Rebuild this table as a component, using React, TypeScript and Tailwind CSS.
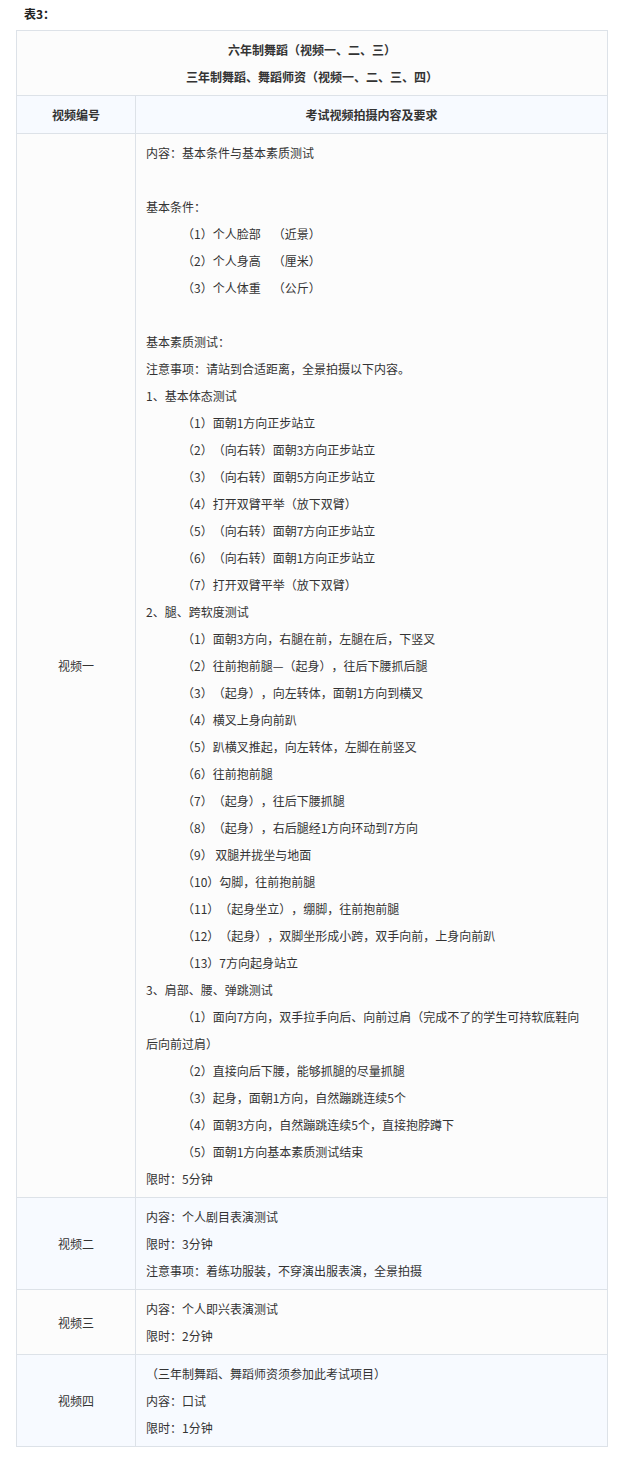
const font = { fontFamily: '"Microsoft YaHei", "Noto Sans CJK SC", "Noto Sans", sans-serif' }

type Line = { text: string; indent?: boolean }

const video1: Line[] = [
  { text: "内容：基本条件与基本素质测试" },
  { text: "" },
  { text: "基本条件：" },
  { text: "（1）个人脸部　（近景）", indent: true },
  { text: "（2）个人身高　（厘米）", indent: true },
  { text: "（3）个人体重　（公斤）", indent: true },
  { text: "" },
  { text: "基本素质测试：" },
  { text: "注意事项：请站到合适距离，全景拍摄以下内容。" },
  { text: "1、基本体态测试" },
  { text: "（1）面朝1方向正步站立", indent: true },
  { text: "（2）（向右转）面朝3方向正步站立", indent: true },
  { text: "（3）（向右转）面朝5方向正步站立", indent: true },
  { text: "（4）打开双臂平举（放下双臂）", indent: true },
  { text: "（5）（向右转）面朝7方向正步站立", indent: true },
  { text: "（6）（向右转）面朝1方向正步站立", indent: true },
  { text: "（7）打开双臂平举（放下双臂）", indent: true },
  { text: "2、腿、跨软度测试" },
  { text: "（1）面朝3方向，右腿在前，左腿在后，下竖叉", indent: true },
  { text: "（2）往前抱前腿—（起身），往后下腰抓后腿", indent: true },
  { text: "（3）（起身），向左转体，面朝1方向到横叉", indent: true },
  { text: "（4）横叉上身向前趴", indent: true },
  { text: "（5）趴横叉推起，向左转体，左脚在前竖叉", indent: true },
  { text: "（6）往前抱前腿", indent: true },
  { text: "（7）（起身），往后下腰抓腿", indent: true },
  { text: "（8）（起身），右后腿经1方向环动到7方向", indent: true },
  { text: "（9） 双腿并拢坐与地面", indent: true },
  { text: "（10）勾脚，往前抱前腿", indent: true },
  { text: "（11）（起身坐立），绷脚，往前抱前腿", indent: true },
  { text: "（12）（起身），双脚坐形成小跨，双手向前，上身向前趴", indent: true },
  { text: "（13）7方向起身站立", indent: true },
  { text: "3、肩部、腰、弹跳测试" },
  { text: "（1）面向7方向，双手拉手向后、向前过肩（完成不了的学生可持软底鞋向后向前过肩）", indent: true },
  { text: "（2）直接向后下腰，能够抓腿的尽量抓腿", indent: true },
  { text: "（3）起身，面朝1方向，自然蹦跳连续5个", indent: true },
  { text: "（4）面朝3方向，自然蹦跳连续5个，直接抱脖蹲下", indent: true },
  { text: "（5）面朝1方向基本素质测试结束", indent: true },
  { text: "限时：5分钟" },
]

const rows: { name: string; bg: string; lines: Line[] }[] = [
  { name: "视频一", bg: "bg-[#fcfcfc]", lines: video1 },
  {
    name: "视频二",
    bg: "bg-[#f7faff]",
    lines: [
      { text: "内容：个人剧目表演测试" },
      { text: "限时：3分钟" },
      { text: "注意事项：着练功服装，不穿演出服表演，全景拍摄" },
    ],
  },
  {
    name: "视频三",
    bg: "bg-[#fcfcfc]",
    lines: [{ text: "内容：个人即兴表演测试" }, { text: "限时：2分钟" }],
  },
  {
    name: "视频四",
    bg: "bg-[#f7faff]",
    lines: [
      { text: "（三年制舞蹈、舞蹈师资须参加此考试项目）" },
      { text: "内容：口试" },
      { text: "限时：1分钟" },
    ],
  },
]

export default function App() {
  return (
    <div className="min-h-screen bg-white text-[12px] text-[#333] [text-spacing-trim:space-all]" style={font}>
      <div className="px-[24px] pt-[4px] leading-[20px] font-bold text-[#222]">表3：</div>

      <div className="mx-[16px] mt-[6px] w-[592px] border border-[#dde2e8]">
        {/* title rows */}
        <div className="border-b border-[#dde2e8] bg-[#fcfcfc] py-[5px] text-center font-bold leading-[27px]">
          <p>六年制舞蹈（视频一、二、三）</p>
          <p>三年制舞蹈、舞蹈师资（视频一、二、三、四）</p>
        </div>
        <div className="flex border-b border-[#dde2e8] bg-[#f7faff] font-bold leading-[27px]">
          <div className="flex w-[119px] shrink-0 items-center justify-center border-r border-[#dde2e8] py-[5px]">
            视频编号
          </div>
          <div className="flex flex-1 items-center justify-center py-[5px]">考试视频拍摄内容及要求</div>
        </div>

        {rows.map((row, i) => (
          <div
            key={i}
            className={`flex leading-[27px] ${row.bg} ${i < rows.length - 1 ? "border-b border-[#dde2e8]" : ""}`}
          >
            <div className="flex w-[119px] shrink-0 items-center justify-center border-r border-[#dde2e8]">
              {row.name}
            </div>
            <div className="flex-1 py-[5px] pl-[10px] pr-[20px]">
              {row.lines.map((l, j) => (
                <p key={j} className={l.indent ? "indent-[36px]" : ""}>
                  {l.text || "\u00a0"}
                </p>
              ))}
            </div>
          </div>
        ))}
      </div>
    </div>
  )
}
